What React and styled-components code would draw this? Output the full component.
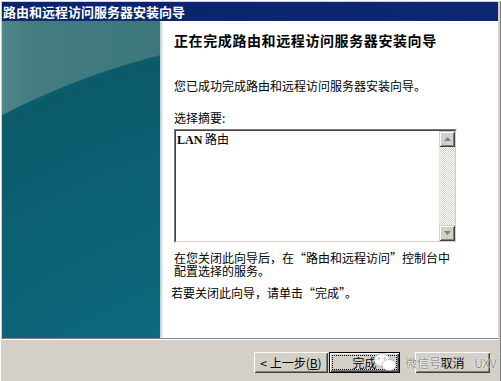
import React from 'react';
import styled, { createGlobalStyle } from 'styled-components';

const GlobalStyle = createGlobalStyle`
  html, body {
    margin: 0;
    padding: 0;
    background: #d4d0c8;
  }
  * {
    box-sizing: border-box;
  }
`;

const cjk = '"Noto Sans CJK SC", "Liberation Sans", sans-serif';

const Window = styled.div`
  width: 501px;
  height: 381px;
  display: flex;
  flex-direction: column;
  background: #d4d0c8;
  padding: 2px 3px 0 2px;
  box-shadow: inset 1px 1px #ffffff, inset -1px 0 #808080;
  font-family: ${cjk};
  position: relative;
  overflow: hidden;
`;

const TitleBar = styled.div`
  height: 19px;
  background: linear-gradient(to right, #0a246a, #0c2870);
  color: #ffffff;
  font-size: 13px;
  font-weight: 700;
  line-height: 19px;
  padding-left: 1px;
  white-space: nowrap;
`;

const Body = styled.div`
  height: 317px;
  display: flex;
`;

const SidePanel = styled.div`
  width: 158px;
  flex-shrink: 0;
  background:
    radial-gradient(circle 724px at 334px 736px, #0f7187 0px, #0d6a7e 440px, #0a5a6a 718px, #0b5e6d 723px, transparent 724px),
    linear-gradient(to right, #4e8588 0px, #437d81 30px, #3c777b 158px);
  box-shadow: 2px 0 2px rgba(90, 110, 120, 0.35);
  position: relative;
  z-index: 1;
`;

const Content = styled.div`
  flex: 1;
  background: #ffffff;
  padding: 11px 39px 0 14px;
  display: flex;
  flex-direction: column;
`;

const Heading = styled.h1`
  margin: 0;
  font-size: 14px;
  font-weight: 700;
  line-height: 16px;
  letter-spacing: 0.6px;
  color: #000000;
  white-space: nowrap;
`;

const Text = styled.p`
  margin: ${(p) => p.$top || 0}px 0 0 ${(p) => p.$left || 0}px;
  font-size: 12px;
  line-height: ${(p) => p.$lh || 14}px;
  color: #000000;
  white-space: nowrap;
`;

const SummaryBox = styled.div`
  margin-top: 4px;
  height: 114px;
  width: 283px;
  display: flex;
  border: 1px solid;
  border-color: #808080 #ffffff #ffffff #808080;
  background: #ffffff;
`;

const SummaryInner = styled.div`
  flex: 1;
  display: flex;
  border: 1px solid;
  border-color: #404040 #d4d0c8 #d4d0c8 #404040;
`;

const SummaryText = styled.div`
  flex: 1;
  padding: 1px 1px;
  font-size: 12px;
  line-height: 14px;
  color: #000000;
`;

const Mono = styled.span`
  font-family: "Liberation Serif", serif;
  font-weight: 700;
  font-size: 12px;
`;

const ScrollBar = styled.div`
  width: 16px;
  display: flex;
  flex-direction: column;
  background-color: #ffffff;
  background-image: repeating-conic-gradient(#d4d0c8 0 25%, #ffffff 0 50%);
  background-size: 2px 2px;
`;

const Track = styled.div`
  flex: 1;
`;

const ArrowButton = styled.div`
  width: 16px;
  height: 16px;
  background: #d4d0c8;
  box-shadow: inset 1px 1px #d4d0c8, inset -1px -1px #404040, inset 2px 2px #ffffff, inset -2px -2px #808080;
  display: flex;
  align-items: center;
  justify-content: center;
`;

const Separator = styled.div`
  height: 2px;
  border-top: 1px solid #808080;
  border-bottom: 1px solid #ffffff;
`;

const Footer = styled.div`
  flex: 1;
  display: flex;
  justify-content: flex-end;
  align-items: flex-start;
  padding: 12px 8px 0 0;
`;

const Button = styled.div`
  width: ${(p) => p.$w}px;
  height: 21px;
  margin-left: ${(p) => p.$gap || 0}px;
  background: #d4d0c8;
  font-size: 12px;
  color: #000000;
  display: flex;
  align-items: center;
  justify-content: center;
  padding: 3px;
  box-shadow: ${(p) =>
    p.$default
      ? 'inset 1px 1px #000, inset -1px -1px #000, inset 2px 2px #ffffff, inset -2px -2px #404040, inset -3px -3px #808080'
      : 'inset 1px 1px #ffffff, inset -1px -1px #404040, inset 2px 2px #d4d0c8, inset -2px -2px #808080'};
  white-space: nowrap;
`;

const Focus = styled.div`
  flex: 1;
  height: 100%;
  border: 1px dotted #000000;
  display: flex;
  align-items: center;
  justify-content: center;
`;

const Watermark = styled.div`
  position: absolute;
  left: 372px;
  top: 352px;
  display: flex;
  align-items: center;
  white-space: nowrap;
  font-size: 12px;
  color: rgba(120, 120, 120, 0.85);
  text-shadow: 0 0 2px #ffffff, 0 0 1px #ffffff;
  pointer-events: none;
`;

const MarkText = styled.span`
  margin-left: ${(p) => p.$gap}px;
`;

const Arrow = ({ up }) => (
  <svg width="7" height="4" viewBox="0 0 7 4">
    <path d={up ? 'M3.5 0 L7 4 L0 4 Z' : 'M0 0 L7 0 L3.5 4 Z'} fill="#808080" />
  </svg>
);

const WeChat = () => (
  <svg width="26" height="20" viewBox="0 0 26 20">
    <ellipse cx="10" cy="8" rx="8" ry="6.5" fill="rgba(255,255,255,0.9)" stroke="rgba(150,150,150,0.7)" strokeWidth="0.8" />
    <ellipse cx="17" cy="13" rx="7" ry="5.5" fill="rgba(255,255,255,0.95)" stroke="rgba(150,150,150,0.7)" strokeWidth="0.8" />
    <circle cx="7" cy="6.5" r="1" fill="rgba(150,150,150,0.8)" />
    <circle cx="12.5" cy="6.5" r="1" fill="rgba(150,150,150,0.8)" />
  </svg>
);

export default function App() {
  return (
    <>
      <GlobalStyle />
      <Window>
        <TitleBar>路由和远程访问服务器安装向导</TitleBar>
        <Body>
          <SidePanel />
          <Content>
            <Heading>正在完成路由和远程访问服务器安装向导</Heading>
            <Text $top={31}>您已成功完成路由和远程访问服务器安装向导。</Text>
            <Text $top={18}>选择摘要:</Text>
            <SummaryBox>
              <SummaryInner>
                <SummaryText>
                  <Mono>LAN</Mono> 路由
                </SummaryText>
                <ScrollBar>
                  <ArrowButton>
                    <Arrow up />
                  </ArrowButton>
                  <Track />
                  <ArrowButton>
                    <Arrow />
                  </ArrowButton>
                </ScrollBar>
              </SummaryInner>
            </SummaryBox>
            <Text $top={8} $lh={13}>
              在您关闭此向导后，在“路由和远程访问”控制台中
              <br />
              配置选择的服务。
            </Text>
            <Text $top={9} $left={-3}>若要关闭此向导，请单击“完成”。</Text>
          </Content>
        </Body>
        <Separator />
        <Footer>
          <Button $w={74}>&lt; 上一步(<u>B</u>)</Button>
          <Button $w={71} $gap={1} $default>
            <Focus>完成</Focus>
          </Button>
          <Button $w={75} $gap={15}>取消</Button>
        </Footer>
        <Watermark>
          <WeChat />
          <MarkText $gap={7}>微信号:</MarkText>
          <MarkText $gap={30}>UXV</MarkText>
        </Watermark>
      </Window>
    </>
  );
}
